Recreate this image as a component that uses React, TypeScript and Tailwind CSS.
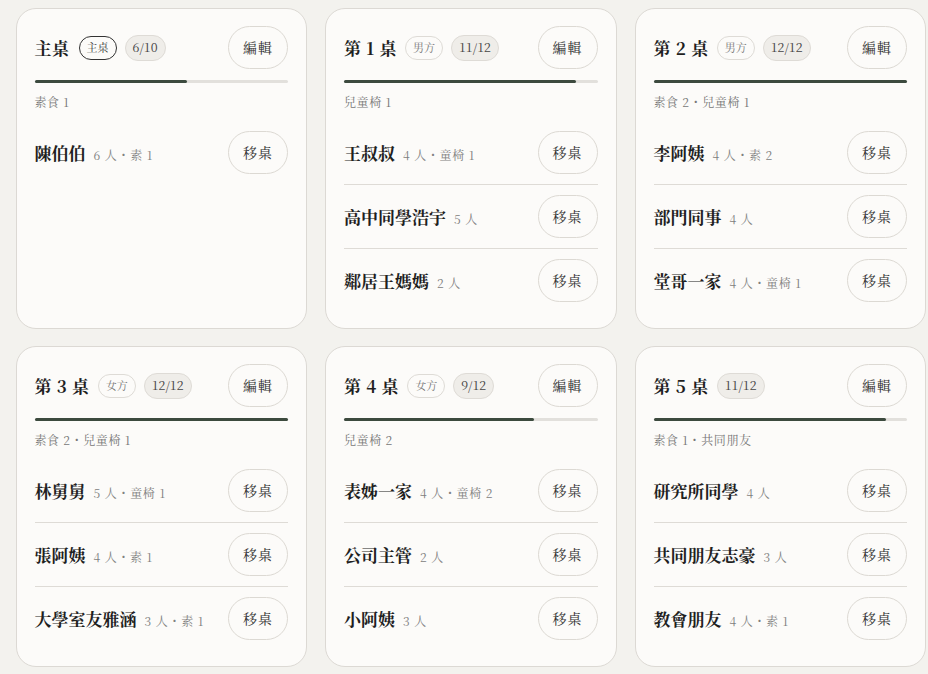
import React from 'react';

type Guest = { name: string; detail: string };
type Table = {
  title: string;
  side?: string;
  main?: boolean;
  seated: number;
  capacity: number;
  note: string;
  guests: Guest[];
};

const tables: Table[] = [
  { title: '主桌', main: true, seated: 6, capacity: 10, note: '素食 1', guests: [{ name: '陳伯伯', detail: '6 人・素 1' }] },
  {
    title: '第 1 桌', side: '男方', seated: 11, capacity: 12, note: '兒童椅 1',
    guests: [
      { name: '王叔叔', detail: '4 人・童椅 1' },
      { name: '高中同學浩宇', detail: '5 人' },
      { name: '鄰居王媽媽', detail: '2 人' },
    ],
  },
  {
    title: '第 2 桌', side: '男方', seated: 12, capacity: 12, note: '素食 2・兒童椅 1',
    guests: [
      { name: '李阿姨', detail: '4 人・素 2' },
      { name: '部門同事', detail: '4 人' },
      { name: '堂哥一家', detail: '4 人・童椅 1' },
    ],
  },
  {
    title: '第 3 桌', side: '女方', seated: 12, capacity: 12, note: '素食 2・兒童椅 1',
    guests: [
      { name: '林舅舅', detail: '5 人・童椅 1' },
      { name: '張阿姨', detail: '4 人・素 1' },
      { name: '大學室友雅涵', detail: '3 人・素 1' },
    ],
  },
  {
    title: '第 4 桌', side: '女方', seated: 9, capacity: 12, note: '兒童椅 2',
    guests: [
      { name: '表姊一家', detail: '4 人・童椅 2' },
      { name: '公司主管', detail: '2 人' },
      { name: '小阿姨', detail: '3 人' },
    ],
  },
  {
    title: '第 5 桌', seated: 11, capacity: 12, note: '素食 1・共同朋友',
    guests: [
      { name: '研究所同學', detail: '4 人' },
      { name: '共同朋友志豪', detail: '3 人' },
      { name: '教會朋友', detail: '4 人・素 1' },
    ],
  },
];

const pill =
  'h-[43px] w-[60px] shrink-0 rounded-full border border-[#dcd9d3] bg-[#fcfbf9] text-[14px] text-[#333] tracking-[0.08em]';

function TableCard({ t }: { t: Table }) {
  const pct = (t.seated / t.capacity) * 100;
  return (
    <div className="rounded-[20px] border border-[#dcd9d4] bg-[#fcfbf9] px-[18px] pt-[17px] pb-[16px]">
      <div className="flex items-center justify-between">
        <div className="flex items-center">
          <h2 className="text-[17px] font-bold text-[#1f1f1f] tracking-[0.03em]">{t.title}</h2>
          {t.main && (
            <span className="ml-[9px] flex h-[24px] items-center rounded-full border border-[#333] px-[7px] text-[11px] text-[#333]">
              主桌
            </span>
          )}
          {t.side && (
            <span className="ml-[8px] flex h-[24px] items-center rounded-full border border-[#dedbd6] px-[7px] text-[11px] text-[#777]">
              {t.side}
            </span>
          )}
          <span className="ml-[8px] flex h-[26px] items-center rounded-full border border-[#dedbd6] bg-[#efede9] px-[7px] text-[12.5px] text-[#444]">
            {t.seated}/{t.capacity}
          </span>
        </div>
        <button className={pill}>編輯</button>
      </div>
      <div className="mt-[11px] h-[3px] w-full rounded-full bg-[#e2e0dc]">
        <div className="h-full rounded-full bg-[#3c4a3e]" style={{ width: `${pct}%` }} />
      </div>
      <p className="mt-[10px] text-[12px] leading-[18px] text-[#777] tracking-[0.05em]">{t.note}</p>
      <ul className="mt-[10px] divide-y divide-[#dedbd6]">
        {t.guests.map((g) => (
          <li key={g.name} className="flex items-center justify-between py-[10px]">
            <div className="flex items-baseline">
              <span className="text-[17px] font-bold text-[#1f1f1f]">{g.name}</span>
              <span className="ml-[8px] text-[12px] text-[#808080] tracking-[0.06em]">{g.detail}</span>
            </div>
            <button className={pill}>移桌</button>
          </li>
        ))}
      </ul>
    </div>
  );
}

export default function App() {
  return (
    <div
      className="min-h-screen bg-[#f3f2ee] pl-[15.5px] pt-2"
      style={{ fontFamily: '"Noto Serif CJK TC", "Liberation Serif", "Noto Sans CJK TC", serif' }}
    >
      <div className="grid grid-cols-[291.5px_291.5px_291.5px] gap-x-[18px] gap-y-[17px]">
        {tables.map((t) => (
          <TableCard key={t.title} t={t} />
        ))}
      </div>
    </div>
  );
}
